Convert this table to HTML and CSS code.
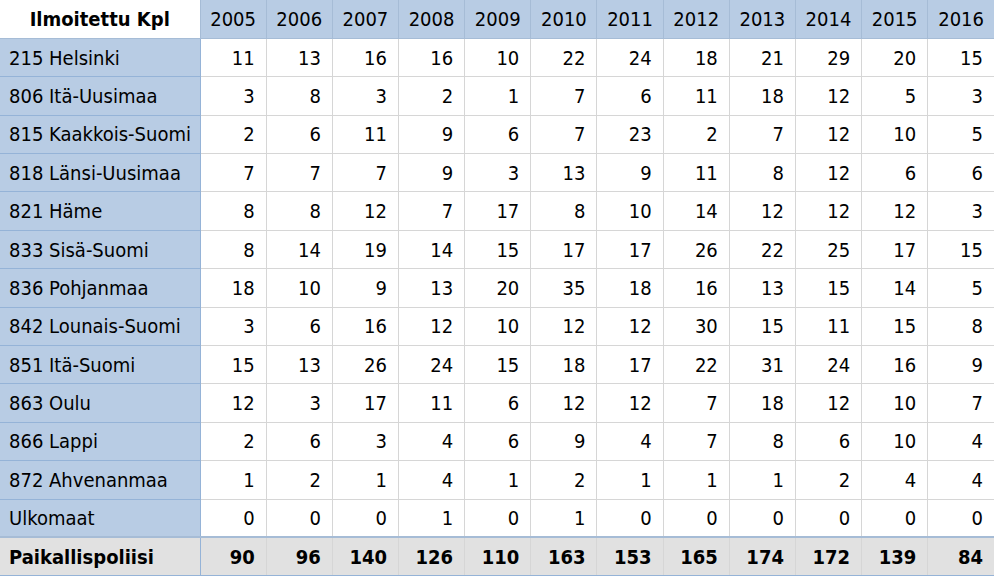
FILE: index.html
```html
<!DOCTYPE html>
<html>
<head>
<meta charset="utf-8">
<link rel="stylesheet" href="styles.css">
</head>
<body>
<table class="grid">
<colgroup><col class="c-name"><col span="12" class="c-year"></colgroup>
<thead>
<tr><th class="corner">Ilmoitettu Kpl</th><th>2005</th><th>2006</th><th>2007</th><th>2008</th><th>2009</th><th>2010</th><th>2011</th><th>2012</th><th>2013</th><th>2014</th><th>2015</th><th>2016</th></tr>
</thead>
<tbody>
<tr><td class="name">215 Helsinki</td><td>11</td><td>13</td><td>16</td><td>16</td><td>10</td><td>22</td><td>24</td><td>18</td><td>21</td><td>29</td><td>20</td><td>15</td></tr>
<tr><td class="name">806 Itä-Uusimaa</td><td>3</td><td>8</td><td>3</td><td>2</td><td>1</td><td>7</td><td>6</td><td>11</td><td>18</td><td>12</td><td>5</td><td>3</td></tr>
<tr><td class="name">815 Kaakkois-Suomi</td><td>2</td><td>6</td><td>11</td><td>9</td><td>6</td><td>7</td><td>23</td><td>2</td><td>7</td><td>12</td><td>10</td><td>5</td></tr>
<tr><td class="name">818 Länsi-Uusimaa</td><td>7</td><td>7</td><td>7</td><td>9</td><td>3</td><td>13</td><td>9</td><td>11</td><td>8</td><td>12</td><td>6</td><td>6</td></tr>
<tr><td class="name">821 Häme</td><td>8</td><td>8</td><td>12</td><td>7</td><td>17</td><td>8</td><td>10</td><td>14</td><td>12</td><td>12</td><td>12</td><td>3</td></tr>
<tr><td class="name">833 Sisä-Suomi</td><td>8</td><td>14</td><td>19</td><td>14</td><td>15</td><td>17</td><td>17</td><td>26</td><td>22</td><td>25</td><td>17</td><td>15</td></tr>
<tr><td class="name">836 Pohjanmaa</td><td>18</td><td>10</td><td>9</td><td>13</td><td>20</td><td>35</td><td>18</td><td>16</td><td>13</td><td>15</td><td>14</td><td>5</td></tr>
<tr><td class="name">842 Lounais-Suomi</td><td>3</td><td>6</td><td>16</td><td>12</td><td>10</td><td>12</td><td>12</td><td>30</td><td>15</td><td>11</td><td>15</td><td>8</td></tr>
<tr><td class="name">851 Itä-Suomi</td><td>15</td><td>13</td><td>26</td><td>24</td><td>15</td><td>18</td><td>17</td><td>22</td><td>31</td><td>24</td><td>16</td><td>9</td></tr>
<tr><td class="name">863 Oulu</td><td>12</td><td>3</td><td>17</td><td>11</td><td>6</td><td>12</td><td>12</td><td>7</td><td>18</td><td>12</td><td>10</td><td>7</td></tr>
<tr><td class="name">866 Lappi</td><td>2</td><td>6</td><td>3</td><td>4</td><td>6</td><td>9</td><td>4</td><td>7</td><td>8</td><td>6</td><td>10</td><td>4</td></tr>
<tr><td class="name">872 Ahvenanmaa</td><td>1</td><td>2</td><td>1</td><td>4</td><td>1</td><td>2</td><td>1</td><td>1</td><td>1</td><td>2</td><td>4</td><td>4</td></tr>
<tr><td class="name">Ulkomaat</td><td>0</td><td>0</td><td>0</td><td>1</td><td>0</td><td>1</td><td>0</td><td>0</td><td>0</td><td>0</td><td>0</td><td>0</td></tr>
</tbody>
<tfoot>
<tr><td class="name">Paikallispoliisi</td><td>90</td><td>96</td><td>140</td><td>126</td><td>110</td><td>163</td><td>153</td><td>165</td><td>174</td><td>172</td><td>139</td><td>84</td></tr>
</tfoot>
</table>
</body>
</html>
```

FILE: styles.css
```css
html, body {
  margin: 0;
  padding: 0;
  background: #ffffff;
}
.grid {
  border-collapse: collapse;
  table-layout: fixed;
  width: 994px;
  font-family: "DejaVu Sans Condensed", "DejaVu Sans", sans-serif;
  font-size: 20px;
  color: #000;
}
.c-name { width: 200px; }
.c-year { width: 66.17px; }
.grid th, .grid td {
  height: 38.4px;
  padding: 0;
  box-sizing: border-box;
  border: 1px solid #d6d6d6;
  white-space: nowrap;
  overflow: hidden;
}
.grid thead th {
  background: #b8cce4;
  font-weight: normal;
  text-align: center;
  border: 1px solid #a6bcd6;
  border-top: none;
}
.grid thead th.corner {
  background: #ffffff;
  font-weight: bold;
  border-left: none;
  border-color: #ffffff;
  border-bottom-color: #a6bcd6;
  border-right-color: #a6bcd6;
}
.grid td {
  text-align: right;
  padding-right: 11px;
  background: #ffffff;
}
.grid td.name {
  text-align: left;
  padding-left: 9px;
  padding-right: 0;
  background: #b8cce4;
  border-left: none;
  border-bottom: 1px solid #95b3d7;
  border-right: 1px solid #95b3d7;
}
.grid thead th:last-child, .grid td:last-child { border-right: none; }
.grid tfoot td {
  background: #e1e1e1;
  font-weight: bold;
  border-top: 2px solid #a6bcd6;
  border-bottom: 2px solid #95b3d7;
}
.grid tfoot td.name { background: #e1e1e1; }
```
